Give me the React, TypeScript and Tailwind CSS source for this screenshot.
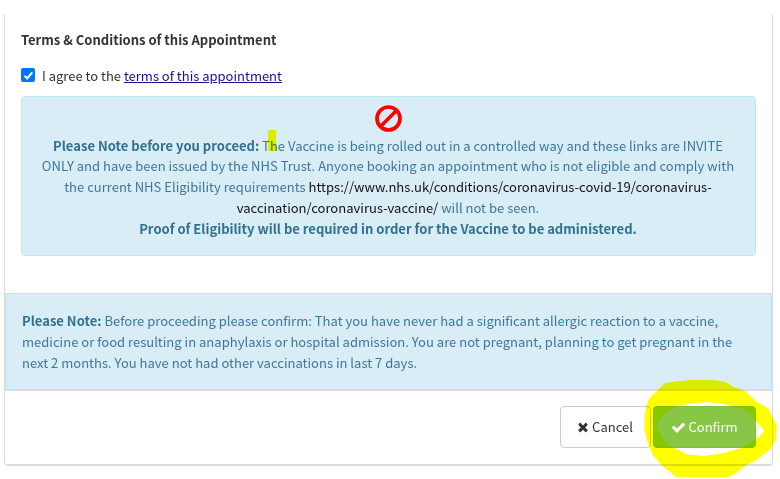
import { useState } from 'react';
import type { ReactNode } from 'react';

const noticeLines = [
  'medicine or food resulting in anaphylaxis or hospital admission. You are not pregnant, planning to get pregnant in the',
  'next 2 months. You have not had other vaccinations in last 7 days.',
];

function BanIcon() {
  return (
    <svg className="mr-px h-[27px] w-[27px]" viewBox="0 0 27 27" fill="none" stroke="#ff0000" strokeWidth="3.7">
      <circle cx="13.5" cy="13.5" r="11.5" />
      <path d="M5.3 21.7 21.7 5.3" />
    </svg>
  );
}

function TimesIcon() {
  return (
    <svg className="h-[14px] w-[14px]" viewBox="0 0 1792 1792" fill="currentColor">
      <path d="M1490 1322q0 40-28 68l-136 136q-28 28-68 28t-68-28l-294-294-294 294q-28 28-68 28t-68-28l-136-136q-28-28-28-68t28-68l294-294-294-294q-28-28-28-68t28-68l136-136q28-28 68-28t68 28l294 294 294-294q28-28 68-28t68 28l136 136q28 28 28 68t-28 68l-294 294 294 294q28 28 28 68z" />
    </svg>
  );
}

function CheckIcon() {
  return (
    <svg className="h-[15px] w-[15px]" viewBox="0 0 1792 1792" fill="currentColor">
      <path d="M1671 566q0 40-28 68l-724 724-136 136q-28 28-68 28t-68-28l-136-136-362-362q-28-28-28-68t28-68l136-136q28-28 68-28t68 28l294 295 656-657q28-28 68-28t68 28l136 136q28 28 28 68z" />
    </svg>
  );
}

// Hand-drawn highlighter ring around the confirm button
function HighlightRing() {
  return (
    <svg className="pointer-events-none absolute left-[640px] top-[375px] h-[104px] w-[140px] mix-blend-multiply" viewBox="0 0 420 312">
      <path
        fill="#ffff00"
        fillRule="evenodd"
        d="M15 110 25 75 35 62 60 40 75 24 100 20 150 15 220 15 255 20 280 35 315 48 350 80 385 100 398 128 410 150 408 192 392 222 350 255 310 275 292 292 265 307 110 307 70 275 38 240 22 200 13 165ZM50 150 75 115 110 93 150 86 200 81 250 87 280 93 315 104 345 136 358 150 373 168 360 182 340 198 300 220 250 235 190 243 140 238 100 217 75 200 60 175Z"
      />
    </svg>
  );
}

function Line({ children }: { children: ReactNode }) {
  return <div className="h-[20.8px] whitespace-nowrap">{children}</div>;
}

export default function App() {
  const [agreed, setAgreed] = useState(true);

  return (
    <div className="relative h-[479px] w-[780px] overflow-hidden bg-white font-['Noto_Sans_CJK_SC',sans-serif] text-[13.04px] leading-[20.8px] text-[#333333]">
      <div className="flex h-full flex-col pl-1 pr-[7px] pt-[14px]">
        <div className="flex h-[451px] flex-col rounded-b border border-t-0 border-[#dddddd] shadow-[0_1px_1px_rgba(0,0,0,0.15)]">
          <div className="flex h-[279px] flex-col px-4 pt-4">
            <h2 className="font-bold tracking-[-0.01px]">Terms &amp; Conditions of this Appointment</h2>

            <label className="mt-[15px] flex items-center">
              <span className="relative flex h-[14px] w-[14px] -translate-y-px items-center justify-center rounded-[2px] bg-[#0075ff]">
                <input
                  type="checkbox"
                  className="absolute inset-0 opacity-0"
                  checked={agreed}
                  onChange={(e) => setAgreed(e.target.checked)}
                />
                {agreed && (
                  <svg className="h-[13px] w-[13px]" viewBox="0 0 13 13" fill="none" stroke="white" strokeWidth="2">
                    <path d="M2.6 6.8 5.2 9.4 10.3 3.3" />
                  </svg>
                )}
              </span>
              <span className="ml-[7px] tracking-[-0.02px]">
                I agree to the{' '}
                <a href="#terms" className="text-[#1a0f8f] underline">
                  terms of this appointment
                </a>
              </span>
            </label>

            <div className="mt-[9px] flex h-[160px] flex-col items-center rounded border border-[#bce8f1] bg-[#d9edf7] pt-2 text-center text-[#3d789a]">
              <BanIcon />
              <div className="mt-1 mr-px">
                <Line>
                  <b className="text-[#31708f]">Please Note before you proceed:</b> T
                  <span className="relative">
                    h
                    <span className="absolute -left-[2px] bottom-1 h-[21px] w-2 bg-[#ffff00] mix-blend-multiply" />
                  </span>
                  e Vaccine is being rolled out in a controlled way and these links are INVITE
                </Line>
                <Line>ONLY and have been issued by the NHS Trust. Anyone booking an appointment who is not eligible and comply with</Line>
                <Line>
                  the current NHS Eligibility requirements{' '}
                  <span className="text-[#111111]">https://www.nhs.uk/conditions/coronavirus-covid-19/coronavirus-</span>
                </Line>
                <Line>
                  <span className="text-[#111111]">vaccination/coronavirus-vaccine/</span> will not be seen.
                </Line>
                <Line>
                  <b className="text-[#31708f]">Proof of Eligibility will be required in order for the Vaccine to be administered.</b>
                </Line>
              </div>
            </div>
          </div>

          <div className="h-[97px] border border-[#bce8f1] bg-[#d9edf7] px-4 pt-[17px] text-[#3d789a]">
            <Line>
              <b className="text-[#31708f]">Please Note:</b> Before proceeding please confirm: That you have never had a significant allergic reaction to a vaccine,
            </Line>
            {noticeLines.map((line) => (
              <Line key={line}>{line}</Line>
            ))}
          </div>

          <div className="flex flex-1 justify-end gap-[2px] border-t border-[#dddddd] pr-4 pt-[15px]">
            <button className="flex h-[42px] w-[91px] items-center justify-center gap-[2px] rounded border border-[#cccccc] bg-white pr-[2px]">
              <TimesIcon />
              Cancel
            </button>
            <button className="flex h-[42px] w-[103px] items-center justify-center gap-[2px] rounded border border-[#7fbf40] bg-[#88c745] text-white">
              <CheckIcon />
              Confirm
            </button>
          </div>
        </div>
      </div>
      <HighlightRing />
    </div>
  );
}
